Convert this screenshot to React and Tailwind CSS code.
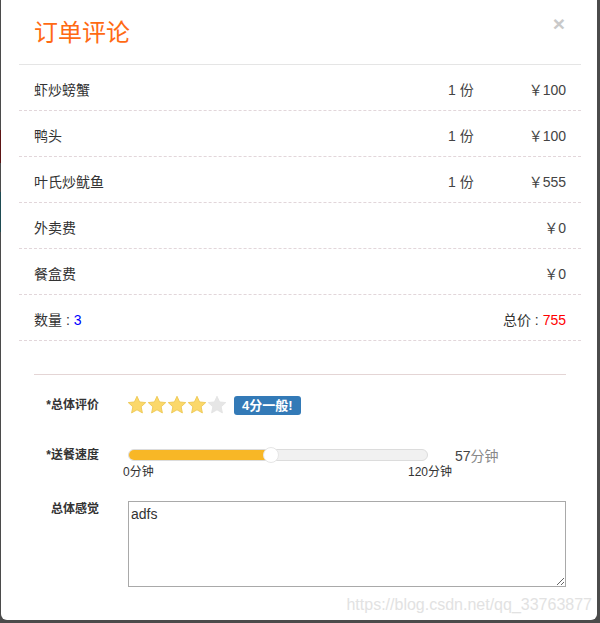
import React from "react";

const items = [
  { name: "虾炒螃蟹", qty: "1 份", price: "￥100" },
  { name: "鸭头", qty: "1 份", price: "￥100" },
  { name: "叶氏炒鱿鱼", qty: "1 份", price: "￥555" },
  { name: "外卖费", qty: "", price: "￥0" },
  { name: "餐盒费", qty: "", price: "￥0" },
];

function Star({ on }) {
  return (
    <svg width="20" height="20" viewBox="0 0 24 24">
      <polygon
        points="12,1.5 15.1,8.3 22.5,9.1 17,14.1 18.5,21.5 12,17.8 5.5,21.5 7,14.1 1.5,9.1 8.9,8.3"
        fill={on ? "#fbd86a" : "#e6e6e6"}
        stroke={on ? "#ecc54e" : "#e2e2e2"}
        strokeWidth="1"
        strokeLinejoin="round"
      />
    </svg>
  );
}

export default function App() {
  const minutes = 57;
  const pct = (minutes / 120) * 100;

  return (
    <div
      className="flex w-[600px] h-[623px] overflow-hidden bg-[#4b4b4b]"
      style={{ fontFamily: '"Liberation Sans", Arial, "Noto Sans CJK SC", sans-serif' }}
    >
      {/* page behind the overlay, peeking out on the left */}
      <div className="flex flex-col w-[1px] shrink-0">
        <div className="h-[130px] bg-[#4b4b4b]" />
        <div className="h-[33px] bg-[#5c1414]" />
        <div className="h-[29px] bg-[#4b4b4b]" />
        <div className="h-[40px] bg-[#1e4b52]" />
        <div className="flex-1 bg-[#4b4b4b]" />
      </div>

      <div className="relative w-[596px] h-[620px] shrink-0 bg-white rounded-b-[6px] text-[#333]">
        <div className="ml-[18px] w-[562px]">
          {/* header */}
          <div className="flex h-[65px] justify-between border-b border-[#e5e5e5] px-[15px]">
            <h4 className="pt-[17px] text-[24px] leading-[32px] text-[#ff6a13]">订单评论</h4>
            <button className="mt-[12px] h-[22px] text-[21px] leading-[21px] font-bold text-[#c9c9c9] mr-[1px]">
              ×
            </button>
          </div>

          {/* order rows */}
          {items.map((it) => (
            <div
              key={it.name}
              className="flex h-[46px] items-center whitespace-nowrap border-b border-dashed border-[#e2d6da] px-[15px] pt-[6px] text-[14px]"
            >
              <span className="flex-1">{it.name}</span>
              <span className="w-[24px] text-[#444]">{it.qty}</span>
              <span className="w-[94px] text-right text-[#444]">{it.price}</span>
            </div>
          ))}
          <div className="flex h-[46px] items-center justify-between border-b border-dashed border-[#e2d6da] px-[15px] pt-[6px] text-[14px]">
            <span>
              数量 : <span className="text-[#0000ff]">3</span>
            </span>
            <span>
              总价 : <span className="text-[#ff0000]">755</span>
            </span>
          </div>

          {/* form */}
          <div className="mx-[15px] mt-[33px] border-t border-[#e4d5d5]">
            <div className="mt-[20px] flex h-[20px] items-center">
              <label className="w-[65px] text-right text-[12px] font-bold">*总体评价</label>
              <div className="ml-[28px] flex items-center">
                <Star on />
                <Star on />
                <Star on />
                <Star on />
                <Star />
                <span className="ml-[7px] rounded-[3px] bg-[#337ab7] px-[8px] py-[2px] text-[13px] font-bold leading-[15px] text-white">
                  4分一般!
                </span>
              </div>
            </div>

            <div className="mt-[30px] flex items-start">
              <label className="w-[65px] text-right text-[12px] font-bold leading-[20px]">*送餐速度</label>
              <div className="ml-[29px] w-[300px]">
                <div className="relative mt-[4px] h-[12px] rounded-full border border-[#dcdcdc] bg-[#f1f1f1]">
                  <div
                    className="h-full rounded-full bg-[#f8b726]"
                    style={{ width: `${pct}%` }}
                  />
                  <div
                    className="absolute top-[-3px] h-[16px] w-[16px] -translate-x-1/2 rounded-full border border-[#e6e6e6] bg-white"
                    style={{ left: `${pct}%` }}
                  />
                </div>
                <div className="ml-[-5px] mt-[3px] flex w-[329px] justify-between text-[12px] leading-[16px]">
                  <span>0分钟</span>
                  <span>120分钟</span>
                </div>
              </div>
              <span className="ml-[27px] mt-[2px] text-[14px] leading-[18px]">
                <span className="text-[#444]">57</span>
                <span className="text-[#888]">分钟</span>
              </span>
            </div>

            <div className="mt-[21px] flex items-start">
              <label className="w-[65px] pt-[1px] text-right text-[12px] font-bold leading-[14px]">总体感觉</label>
              <textarea
                className="ml-[29px] h-[86px] w-[438px] border border-[#a9a9a9] px-[2px] pt-[2px] text-[14px] text-[#333] outline-none"
                defaultValue="adfs"
              />
            </div>
          </div>
        </div>

        <div className="absolute bottom-[5px] right-[5px] text-[16px] leading-[20px] text-[#e2e2e2]">
          https://blog.csdn.net/qq_33763877
        </div>
      </div>

      <div className="flex-1 bg-[#4b4b4b]" />
    </div>
  );
}
